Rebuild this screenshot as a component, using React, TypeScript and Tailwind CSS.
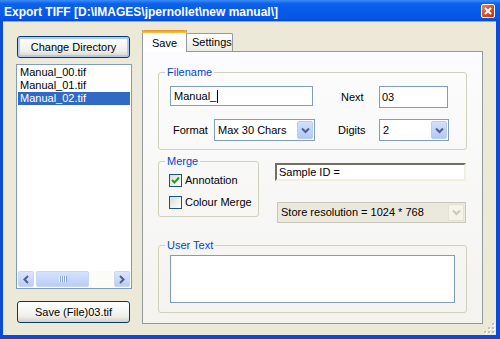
import React from 'react';

const Chevron: React.FC<{ color: string }> = ({ color }) => (
  <svg width="9" height="7" viewBox="0 0 9 7">
    <path d="M1 1.5 L4.5 5 L8 1.5" fill="none" stroke={color} strokeWidth="2" />
  </svg>
);

const XpSelect: React.FC<{ value: string; className: string; disabled?: boolean }> = ({
  value,
  className,
  disabled,
}) => (
  <div
    className={
      disabled
        ? `flex items-stretch border border-[#C9C7BA] bg-[#EBE9DD] ${className}`
        : `flex items-stretch border border-[#7F9DB9] bg-white ${className}`
    }
  >
    <div className="flex flex-1 items-center pl-[3px] text-black">{value}</div>
    {disabled ? (
      <div className="m-[1px] flex w-[16px] items-center justify-center rounded-[2px] border border-[#E3E1D6] bg-[#F5F4EA]">
        <Chevron color="#C9C7BA" />
      </div>
    ) : (
      <div className="m-[1px] flex w-[16px] items-center justify-center rounded-[2px] border border-[#B9CBF3] bg-[linear-gradient(to_bottom,#D2E0FD,#B4C8F6)]">
        <Chevron color="#4D6185" />
      </div>
    )}
  </div>
);

const Checkbox: React.FC<{ checked?: boolean; label: string }> = ({ checked, label }) => (
  <div className="flex h-[13px] items-center">
    <div className="flex h-[13px] w-[13px] items-center justify-center border border-[#1C5180] bg-[linear-gradient(135deg,#DCDCD7,#FFFFFF)]">
      {checked && (
        <svg width="9" height="9" viewBox="0 0 9 9">
          <path d="M1 4 L3.5 6.5 L8 1.5" fill="none" stroke="#21A121" strokeWidth="2" />
        </svg>
      )}
    </div>
    <span className="ml-[3px]">{label}</span>
  </div>
);

const XpButton: React.FC<{ label: string; focused?: boolean }> = ({ label, focused }) => (
  <div
    className={`ml-[1px] flex h-[22px] w-[113px] items-center justify-center rounded-[3px] border border-[#003C74] bg-[linear-gradient(to_bottom,#FFFFFF,#F0F0EA_70%,#D6D0C5)] ${
      focused ? 'shadow-[inset_0_0_0_2px_#B4C9F0]' : ''
    }`}
  >
    {label}
  </div>
);

export default function App() {
  const files = ['Manual_00.tif', 'Manual_01.tif', 'Manual_02.tif'];

  return (
    <div className="flex h-[339px] w-[500px] flex-col bg-[#0A4BDC] font-['Liberation_Sans',Arial,sans-serif] text-[11px] text-black">
      {/* title bar */}
      <div className="flex h-[21px] items-center justify-between bg-[linear-gradient(to_bottom,#3A8CF6_0%,#0C61EA_18%,#0759E8_60%,#0656E4_90%,#0445CA_100%)] pl-[4px] pr-[5px]">
        <span className="pt-[2px] text-[12px] font-bold text-white">
          Export TIFF [D:\IMAGES\jpernollet\new manual\]
        </span>
        <div className="flex h-[14px] w-[14px] items-center justify-center rounded-[2px] border border-white bg-[linear-gradient(135deg,#E9866A,#D9481F_55%,#C53C14)]">
          <svg width="8" height="8" viewBox="0 0 8 8">
            <path d="M1 1 L7 7 M7 1 L1 7" stroke="white" strokeWidth="2" />
          </svg>
        </div>
      </div>

      {/* window body */}
      <div className="relative mb-[4px] ml-[3px] mr-[4px] flex flex-1 border-t border-[#ACA899] bg-[#ECE9D8] pl-[13px] pt-[8px]">
        {/* left column */}
        <div className="mt-[6px] flex w-[116px] flex-col">
          <XpButton label="Change Directory" focused />
          <div className="mt-[6px] flex h-[225px] flex-col border border-[#7F9DB9] bg-white">
            <div className="flex-1 pt-[1px]">
              {files.map((f, i) => (
                <div
                  key={f}
                  className={`mx-[1px] h-[13px] pl-[2px] leading-[13px] ${
                    i === 2 ? 'bg-[#316AC5] text-white' : ''
                  }`}
                >
                  {f}
                </div>
              ))}
            </div>
            <div className="mb-[1px] flex h-[16px] items-stretch bg-[#FBFBF8] px-[1px]">
              <div className="flex w-[16px] items-center justify-center rounded-[2px] border border-[#C9D6F5] bg-[linear-gradient(to_bottom,#DCE6FD,#B9CDF8)]">
                <svg width="6" height="9" viewBox="0 0 6 9">
                  <path d="M5 1 L1.5 4.5 L5 8" fill="none" stroke="#4D6185" strokeWidth="2" />
                </svg>
              </div>
              <div className="ml-[2px] flex w-[53px] items-center justify-center rounded-[2px] border border-[#C9D6F5] bg-[linear-gradient(to_bottom,#D6E2FD,#B9CDF8)]">
                <svg width="8" height="6" viewBox="0 0 8 6">
                  <path d="M0.5 0 V6 M2.5 0 V6 M4.5 0 V6 M6.5 0 V6" stroke="#EEF3FF" strokeWidth="1" />
                  <path d="M1.5 0 V6 M3.5 0 V6 M5.5 0 V6 M7.5 0 V6" stroke="#8CA5DB" strokeWidth="1" />
                </svg>
              </div>
              <div className="flex-1" />
              <div className="flex w-[16px] items-center justify-center rounded-[2px] border border-[#C9D6F5] bg-[linear-gradient(to_bottom,#DCE6FD,#B9CDF8)]">
                <svg width="6" height="9" viewBox="0 0 6 9">
                  <path d="M1 1 L4.5 4.5 L1 8" fill="none" stroke="#4D6185" strokeWidth="2" />
                </svg>
              </div>
            </div>
          </div>
          <div className="mt-[12px]">
            <XpButton label="Save (File)03.tif" />
          </div>
        </div>

        {/* tab area */}
        <div className="ml-[10px] flex w-[341px] flex-col">
          <div className="flex h-[21px] items-end">
            <div className="relative z-10 -mb-[1px] flex h-[22px] w-[45px] flex-col border-x border-[#919B9C] bg-white">
              <div className="-mx-[1px] h-[3px] rounded-t-[3px] bg-[linear-gradient(to_bottom,#E68B2C,#FFC73C)]" />
              <div className="pl-[9px] pt-[2px]">Save</div>
            </div>
            <div className="flex h-[18px] w-[46px] items-center rounded-t-[2px] border border-b-0 border-l-0 border-[#919B9C] bg-[linear-gradient(to_bottom,#FFFFFF,#ECEBE6)] pl-[5px]">
              Settings
            </div>
          </div>

          <div className="flex h-[273px] flex-col border border-[#919B9C] bg-[linear-gradient(to_bottom,#FCFCFE,#F4F3EE)] pl-[15px] pt-[13px]">
            {/* Filename */}
            <fieldset className="w-[309px] rounded-[3px] border border-[#D0D0BF] pb-[8px]">
              <legend className="ml-[6px] px-[2px] leading-[14px] text-[#0046D5]">Filename</legend>
              <div className="mt-[7px] flex items-start">
                <div className="ml-[11px] flex h-[20px] w-[143px] items-center border border-[#7F9DB9] bg-white pl-[3px]">
                  Manual_<span className="ml-[1px] inline-block h-[13px] w-[1px] bg-black" />
                </div>
                <div className="ml-[28px] flex h-[22px] w-[38px] items-center">Next</div>
                <div className="flex h-[22px] w-[69px] items-center border border-[#7F9DB9] bg-white pl-[2px]">
                  03
                </div>
              </div>
              <div className="mt-[11px] flex items-center">
                <div className="ml-[14px] w-[41px]">Format</div>
                <XpSelect value="Max 30 Chars" className="h-[22px] w-[101px]" />
                <div className="ml-[23px] w-[41px]">Digits</div>
                <XpSelect value="2" className="h-[22px] w-[70px]" />
              </div>
            </fieldset>

            {/* Merge row */}
            <div className="mt-[4px] flex items-start">
              <fieldset className="w-[101px] rounded-[3px] border border-[#D0D0BF] pb-[7px]">
                <legend className="ml-[6px] px-[2px] leading-[14px] text-[#0046D5]">Merge</legend>
                <div className="ml-[10px] mt-[6px] flex flex-col gap-[9px]">
                  <Checkbox checked label="Annotation" />
                  <Checkbox label="Colour Merge" />
                </div>
              </fieldset>
              <div className="ml-[16px] flex flex-col">
                <div className="mt-[9px] flex h-[18px] w-[191px] items-center border-2 border-b-[#F1EFE2] border-l-[#716F64] border-r-[#F1EFE2] border-t-[#716F64] bg-white pl-[2px]">
                  Sample ID =
                </div>
                <XpSelect
                  disabled
                  value="Store resolution = 1024 * 768"
                  className="ml-[2px] mt-[21px] h-[21px] w-[189px]"
                />
              </div>
            </div>

            {/* User Text */}
            <fieldset className="mt-[15px] w-[309px] rounded-[3px] border border-[#D0D0BF] pb-[9px]">
              <legend className="ml-[6px] px-[2px] leading-[14px] text-[#0046D5]">User Text</legend>
              <div className="ml-[11px] mt-[3px] h-[48px] w-[285px] border border-[#7F9DB9] bg-white" />
            </fieldset>
          </div>
        </div>

        {/* resize grip */}
        <svg className="absolute bottom-[1px] right-[1px]" width="12" height="12" viewBox="0 0 12 12">
          {[
            [9, 1],
            [9, 5],
            [5, 5],
            [9, 9],
            [5, 9],
            [1, 9],
          ].map(([x, y]) => (
            <g key={`${x}-${y}`}>
              <rect x={x + 1} y={y + 1} width="2" height="2" fill="#FFFFFF" />
              <rect x={x} y={y} width="2" height="2" fill="#C5C2B2" />
            </g>
          ))}
        </svg>
      </div>
    </div>
  );
}
